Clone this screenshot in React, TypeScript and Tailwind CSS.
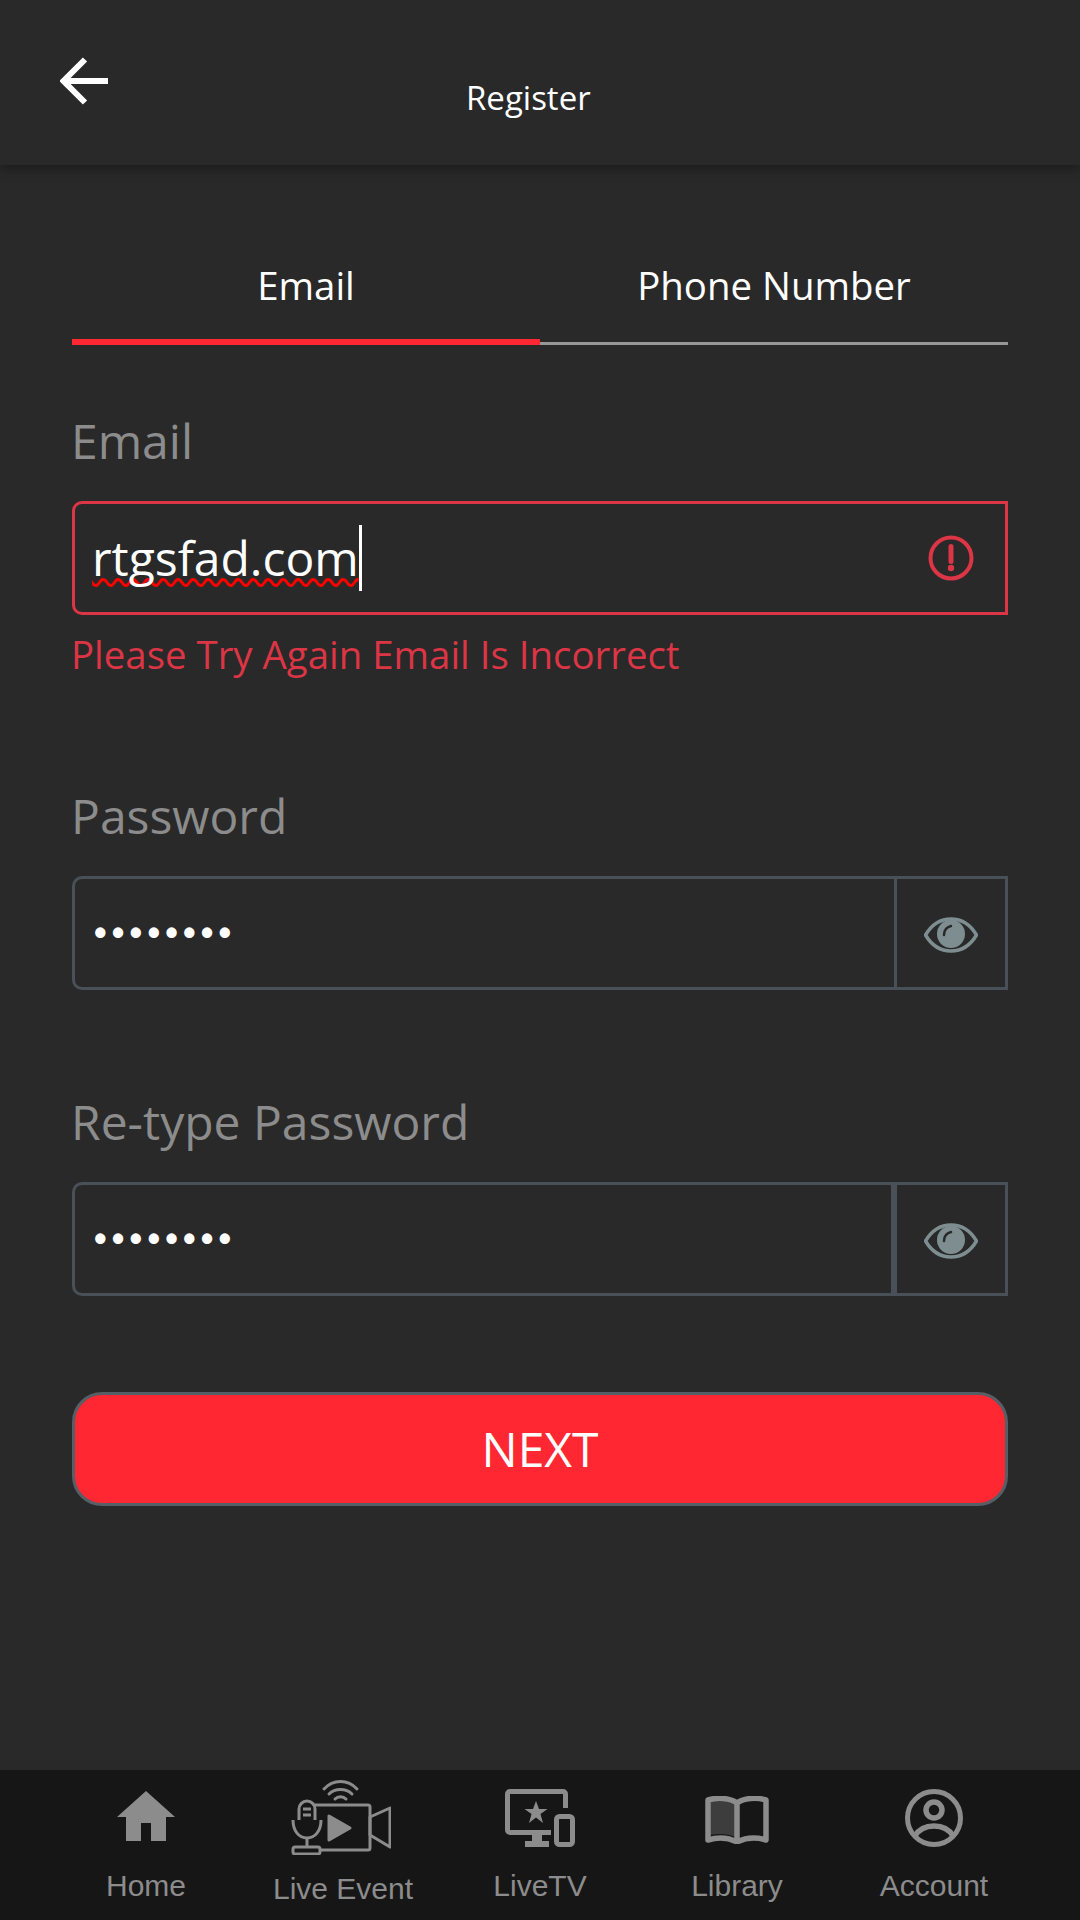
import React from "react";

function Eye() {
  return (
    <svg className="mt-[4px]" width="54" height="36" viewBox="0 0 54 36" fill="none">
      <path d="M1.5 18C8 7 17 2 27 2s19 5 25.500 16C46 29 37 34 27 34S8 29 1.500 18Z" stroke="#7e8e90" strokeWidth="3.500" strokeLinejoin="round" />
      <circle cx="27" cy="17" r="14" fill="#7e8e90" />
      <path d="M20 18c0-5 3-8 7-9" stroke="#292929" strokeWidth="2.500" strokeLinecap="round" />
    </svg>
  );
}

function PasswordField({ label, dividerClass }: { label: string; dividerClass: string }) {
  return (
    <div>
      <div className="text-[48px] leading-[60px] mb-[30px] -ml-[1px] text-[#8c8c8c]">{label}</div>
      <div className="flex h-[114px] border-[3px] border-[#495057] rounded-l-[10px]">
        <div className="flex-1 flex items-center pl-[19px] text-white text-[36px] tracking-[5.2px] font-['Liberation_Sans',sans-serif] font-bold">••••••••</div>
        <div className={`shrink-0 flex items-center justify-center ${dividerClass}`}>
          <Eye />
        </div>
      </div>
    </div>
  );
}

function NavItem({ icon, label, labelClass = "" }: { icon: React.ReactNode; label: string; labelClass?: string }) {
  return (
    <div className="w-[197px] flex flex-col items-center">
      <div className="h-[98px] flex items-end justify-center">{icon}</div>
      <div className={`text-[30px] leading-[36px] text-[#8c8c8c] font-['Liberation_Sans',Arial,sans-serif] ${labelClass}`}>{label}</div>
    </div>
  );
}

const C = "#8c8c8c";

export default function App() {
  return (
    <div className="w-[1080px] h-[1920px] bg-[#292929] flex flex-col font-['Open_Sans',sans-serif] overflow-hidden">
      <header className="h-[165px] shrink-0 flex items-start shadow-[0_3px_12px_rgba(0,0,0,0.4)]">
        <svg className="ml-[60px] mt-[57px] shrink-0" width="48" height="48" viewBox="0 0 48 48" fill="none">
          <path d="M48 24H4M25 2.500 3.500 24 25 45.500" stroke="#fff" strokeWidth="6" />
        </svg>
        <div className="ml-[358px] mt-[75px] text-[33px] leading-[46px] text-white">Register</div>
      </header>

      <main className="flex-1 px-[72px] flex flex-col">
        <div className="mt-[93px] flex h-[87px]">
          <div className="flex-1 h-full border-b-[6px] border-[#fe2732] text-center text-[38.400px] leading-[54px] text-white">Email</div>
          <div className="flex-1 h-full flex flex-col justify-between">
            <div className="text-center text-[38.400px] leading-[54px] text-white">Phone Number</div>
            <div className="h-[3px] bg-[#979797]" />
          </div>
        </div>

        <div className="mt-[66px] mb-[30px] -ml-[1px] text-[48px] leading-[60px] text-[#8c8c8c]">Email</div>
        <div className="h-[114px] border-[3px] border-[#dc3545] rounded-l-[10px] flex items-center pl-[17px] pr-[31px]">
          <span className="text-[48px] leading-[66px] text-white underline decoration-wavy decoration-[#ff0000] decoration-[3px] underline-offset-[2px] [text-decoration-skip-ink:none]">rtgsfad.com</span>
          <span className="w-[3px] h-[66px] bg-white shrink-0" />
          <svg className="ml-auto shrink-0" width="46" height="46" viewBox="0 0 46 46" fill="none">
            <circle cx="23" cy="23" r="20.500" stroke="#dc3545" strokeWidth="4" />
            <path d="M23 11.500v15" stroke="#dc3545" strokeWidth="5" strokeLinecap="round" />
            <circle cx="23" cy="33" r="3.200" fill="#dc3545" />
          </svg>
        </div>
        <div className="mt-[14px] -ml-[1px] text-[38.400px] leading-[50px] text-[#dc3545]">Please Try Again Email Is Incorrect</div>

        <div className="mt-[107px]">
          <PasswordField label="Password" dividerClass="w-[111px] border-l-[3px] border-[#495057]" />
        </div>
        <div className="mt-[102px]">
          <PasswordField label="Re-type Password" dividerClass="w-[114px] border-l-[6px] border-[#495057]" />
        </div>

        <div className="mt-[96px] h-[114px] rounded-[30px] bg-[#fe2732] border-[3px] border-[#565e66] flex items-center justify-center text-[48px] text-white">NEXT</div>
      </main>

      <nav className="h-[150px] shrink-0 bg-[#161616] flex justify-center">
        <NavItem
          label="Home"
          icon={
            <svg className="mb-[27px]" width="58" height="50" viewBox="0 0 58 50">
              <path d="M29 0 58 26H49V50H34V32H24V50H9V26H0Z" fill={C} />
            </svg>
          }
        />
        <NavItem
          label="Live Event"
          labelClass="mt-[3px]"
          icon={
            <svg className="mb-[13px] mr-[4px]" width="100" height="76" viewBox="0 0 100 76" fill="none" stroke={C} strokeWidth="3">
              <path d="M23 26H77a2 2 0 0 1 2 2V69a2 2 0 0 1-2 2H30" />
              <path d="M79 38 99 29V68L79 56Z" strokeLinejoin="round" />
              <path d="M38 37v24l21-12Z" fill={C} strokeLinejoin="round" />
              <rect x="8" y="22" width="16" height="31" rx="8" fill="#161616" />
              <path d="M12 30h8M12 36h8" />
              <path d="M2 41c0 11 6 18 14 18s14-7 14-18" fill="#161616" />
              <path d="M16 59v9" />
              <rect x="2" y="68" width="27" height="7" rx="2" fill="#161616" />
              <path d="M33 10c9-10 24-10 33 0M38 15c6-6 17-6 23 0M44 20c3-3 8-3 11 0" strokeLinecap="round" />
            </svg>
          }
        />
        <NavItem
          label="LiveTV"
          icon={
            <svg className="mb-[21px]" width="70" height="58" viewBox="0 0 70 58" fill="none">
              <path d="M60.500 19V5a2.500 2.500 0 0 0-2.500-2.500H5A2.500 2.500 0 0 0 2.500 5V41A2.500 2.500 0 0 0 5 43.500H46" stroke={C} strokeWidth="5" />
              <path d="M31 12l3 8h8.500l-7 5 2.500 9-7-5.500-7 5.500 2.500-9-7-5h8.500Z" fill={C} />
              <path d="M27 44h10v8h7v6H20v-6h7Z" fill={C} />
              <rect x="51.500" y="27.500" width="16" height="28" rx="3" stroke={C} strokeWidth="5" />
            </svg>
          }
        />
        <NavItem
          label="Library"
          icon={
            <svg className="mb-[24px]" width="64" height="48" viewBox="0 0 64 48" fill="none">
              <path d="M5 4c10-2 20-1 27 4v34c-7-4-17-5-27-3Z" fill="#3d3d3d" />
              <path d="M32 7C25 2 13 1 3 4v40c10-3 21-2 29 2 8-4 19-5 29-2V4C51 1 39 2 32 7Zm0 0v38" stroke={C} strokeWidth="5.500" strokeLinejoin="round" />
            </svg>
          }
        />
        <NavItem
          label="Account"
          icon={
            <svg className="mb-[21px]" width="58" height="58" viewBox="0 0 58 58" fill="none">
              <circle cx="29" cy="29" r="26.500" stroke={C} strokeWidth="5" />
              <circle cx="29" cy="21" r="8" stroke={C} strokeWidth="5.500" />
              <path d="M10 47c4-7 11-10 19-10s15 3 19 10" stroke={C} strokeWidth="5.500" />
            </svg>
          }
        />
      </nav>
    </div>
  );
}
